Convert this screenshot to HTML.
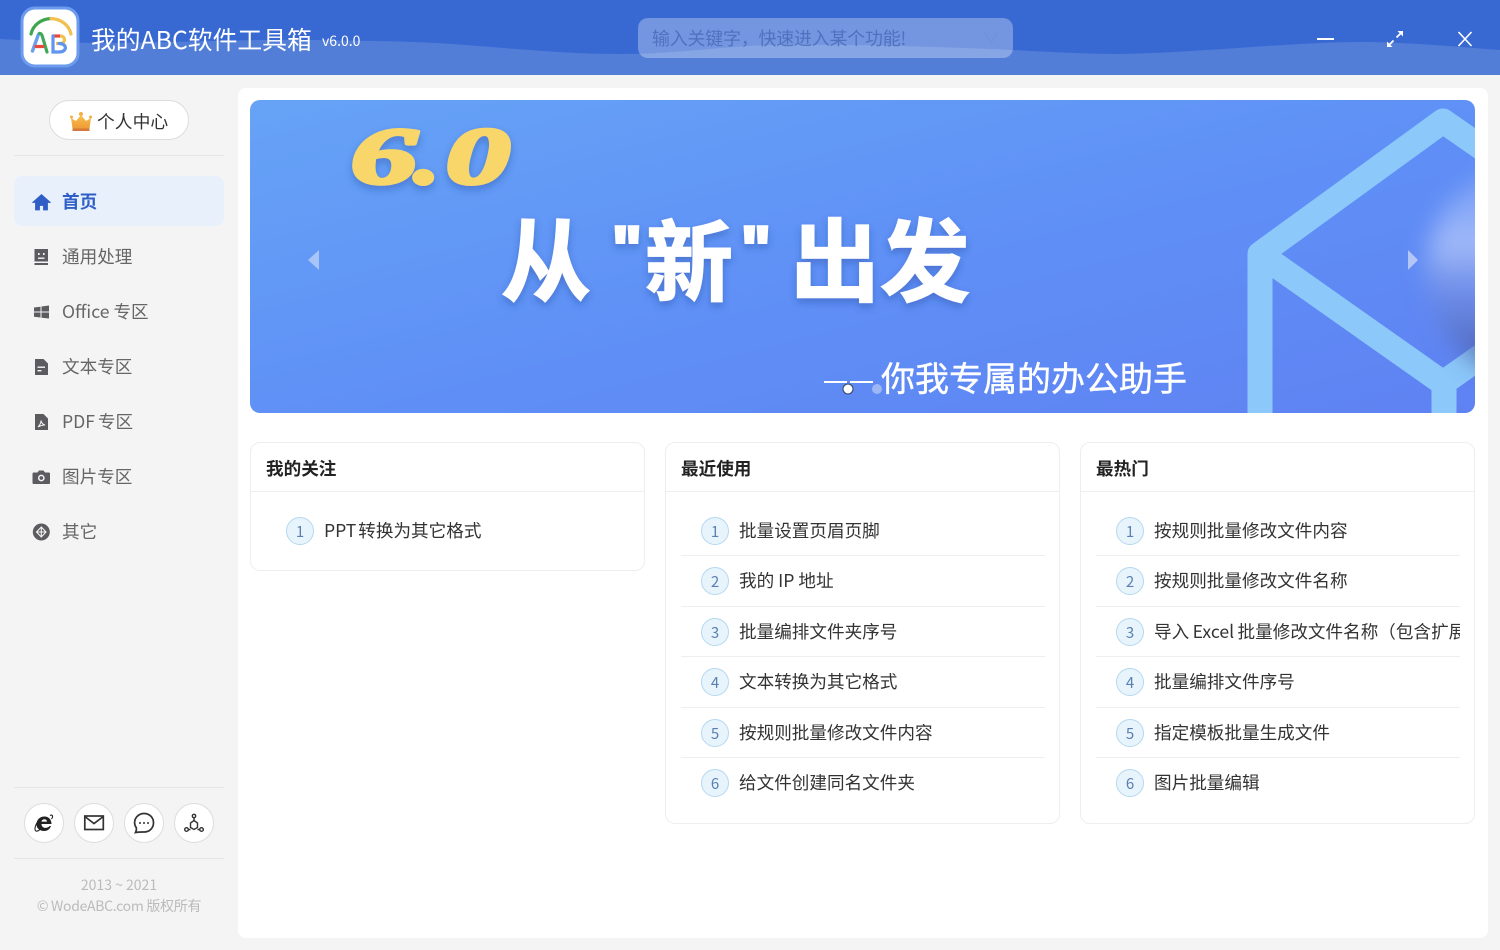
<!DOCTYPE html>
<html lang="zh-CN"><head><meta charset="utf-8"><title>我的ABC软件工具箱</title>
<style>
*{box-sizing:border-box;margin:0;padding:0}
html,body{width:1500px;height:950px;overflow:hidden;background:#f4f4f4;font-family:"Noto Sans CJK SC","Liberation Sans",sans-serif;color:#333}
.a{position:absolute;white-space:nowrap}
#page{position:relative;width:1500px;height:950px;overflow:hidden}
.nav{position:absolute;left:62px;font-size:17.6px;line-height:24px;color:#666;white-space:nowrap}
.ico{position:absolute;left:31px}
.div{position:absolute;left:14px;width:210px;height:1px;background:#e6e6e6}
.round{position:absolute;top:803px;width:40px;height:40px;border-radius:50%;background:#fff;border:1px solid #ddd}
.round svg{position:absolute;left:6px;top:6px}
.card{position:absolute;top:442px;width:395px;background:#fff;border:1px solid #eee;border-radius:10px;overflow:hidden}
.card h3{position:absolute;left:15px;top:13px;font-size:17.6px;line-height:26px;font-weight:700;color:#222;white-space:nowrap}
.card .hl{position:absolute;left:0;right:0;top:48px;height:1px;background:#eee}
.n{position:absolute;left:35px;width:28px;height:28px;border-radius:50%;background:#e8f4fc;border:1px solid #b5d8ee;color:#5a7fb0;font-size:15px;line-height:27px;text-align:center}
.t{position:absolute;left:73px;width:306px;overflow:hidden;font-size:17.6px;line-height:26px;color:#333;white-space:nowrap}
.s{position:absolute;left:15px;width:364px;height:1px;background:#eee}
</style></head><body><div id="page">

<!-- header -->
<svg class="a" style="left:0;top:0" width="1500" height="75" viewBox="0 0 1500 75">
<rect width="1500" height="75" fill="#3868d2"/>
<path d="M0 39C40 41 70 43 100 43C170 43 240 39 312 40C360 41 400 41 437 43C500 47 560 54 620 54C680 54 720 46 772 45C860 44 950 47 1013 50C1050 52 1085 54 1117 54C1200 53 1300 41 1369 42C1420 43 1460 47 1500 50V75H0Z" fill="#527ed8"/>
</svg>
<svg class="a" style="left:18px;top:5px" width="64" height="64" viewBox="18 5 64 64">
<rect x="22" y="8" width="56" height="58" rx="13" fill="#fff" stroke="#6d9bee" stroke-width="3"/>
<path d="M31 34C33 25 41 19 51 18.500" fill="none" stroke="#3fa64f" stroke-width="3.200" stroke-linecap="round"/>
<path d="M51 18.500C61 19 69 25 71 34" fill="none" stroke="#f2c04d" stroke-width="3.200" stroke-linecap="round"/>
<path d="M32.500 51L37.500 37C38 35 38.500 34 39.500 33.500" fill="none" stroke="#6a9ff0" stroke-width="3.400" stroke-linecap="round"/>
<path d="M39.500 33.500C41.500 33.500 42 35 42.500 37L47 52" fill="none" stroke="#41a85a" stroke-width="3.200" stroke-linecap="round"/>
<path d="M36 46.500H43" stroke="#e8493f" stroke-width="3.200" stroke-linecap="round"/>
<path d="M53 36H60" stroke="#e8493f" stroke-width="3.200" stroke-linecap="round"/>
<path d="M60 36C66 36 66 43.500 60 43.500H56" fill="none" stroke="#f2c04d" stroke-width="3.200"/>
<path d="M59 43.500C67.500 43.500 67.500 52 59 52H53V36" fill="none" stroke="#5f95ee" stroke-width="3.200" stroke-linecap="round"/>
</svg>
<div class="a" style="left:91px;top:20px;font-size:24.800px;line-height:38px;color:#fff">我的ABC软件工具箱</div>
<div class="a" style="left:322px;top:31px;font-size:14px;line-height:20px;color:#fff">v6.0.0</div>
<div class="a" style="left:638px;top:18px;width:375px;height:40px;border-radius:10px;background:rgba(255,255,255,.3)"></div>
<div class="a" style="left:652px;top:25px;font-size:18px;line-height:26px;color:rgba(50,85,165,.55);letter-spacing:-.25px">输入关键字，快速进入某个功能!</div>
<svg class="a" style="left:983px;top:30px" width="16" height="16"><path d="M2 3L8 13L14 3" fill="none" stroke="#6e8fdc" stroke-width="1"/></svg>
<div class="a" style="left:1317px;top:38px;width:17px;height:2px;background:#fff"></div>
<svg class="a" style="left:1385px;top:29px" width="20" height="20" viewBox="0 0 20 20"><path d="M4 16L8.500 11.500M11.500 8.500L16 4" stroke="#fff" stroke-width="1.800"/><path d="M2 18V12.500L7.500 18ZM18 2V7.500L12.500 2Z" fill="#fff"/></svg>
<svg class="a" style="left:1456px;top:30px" width="18" height="18"><path d="M2.500 2L15.500 16M15.500 2L2.500 16" stroke="#fff" stroke-width="1.600"/></svg>

<!-- main panel -->
<div class="a" style="left:238px;top:88px;width:1250px;height:850px;background:#fff;border-radius:8px"></div>

<!-- sidebar -->
<div class="a" style="left:49px;top:100px;width:140px;height:40px;border-radius:20px;background:#fff;border:1px solid #ddd"></div>
<svg class="a" style="left:69px;top:111px" width="25" height="22" viewBox="0 0 25 22">
<defs><linearGradient id="cr" x1="0" y1="0" x2="0" y2="1"><stop offset="0" stop-color="#fbc04c"/><stop offset="1" stop-color="#ee9a3a"/></linearGradient></defs>
<circle cx="12" cy="3" r="2" fill="#f4ae42"/><circle cx="2.500" cy="6" r="1.500" fill="#f4ae42"/><circle cx="21.500" cy="6" r="1.500" fill="#f4ae42"/>
<path d="M2 7L7 10L12 4L17 10L22 7L20.500 17.500H3.500Z" fill="url(#cr)"/><rect x="3.500" y="17.500" width="17" height="2.500" fill="#d5783a"/></svg>
<div class="a" style="left:97px;top:108px;font-size:17.800px;line-height:26px;color:#333">个人中心</div>
<div class="div" style="top:155px"></div>

<div class="a" style="left:14px;top:176px;width:210px;height:50px;border-radius:8px;background:#e8f0fc"></div>
<svg class="ico" style="top:192px" width="20" height="20" viewBox="0 0 20 20"><path d="M10.500 2.500L1.500 10.500H4.500V18H8.500V13.500H12.500V18H16.500V10.500H19.500Z" fill="#2f5fc6" stroke="#2f5fc6" stroke-width=".8" stroke-linejoin="round"/></svg>
<div class="nav" style="top:190px;color:#2f5fc6;font-weight:700">首页</div>
<svg class="ico" style="top:247px" width="20" height="20" viewBox="0 0 20 20"><path d="M3.500 2H17V14.500H3.500Z" fill="#5c5c60"/><rect x="3.500" y="16" width="13.500" height="2" fill="#5c5c60"/><rect x="7" y="6" width="1.600" height="2" fill="#f5f5f5"/><rect x="12" y="6" width="1.600" height="2" fill="#f5f5f5"/><rect x="7" y="10.500" width="6.500" height="1.400" fill="#f5f5f5"/></svg>
<div class="nav" style="top:245px">通用处理</div>
<svg class="ico" style="top:302px" width="20" height="20" viewBox="0 0 20 20"><path d="M3 5.500L9.500 4.700V9.500H3ZM10.500 4.500L18 3.500V9.500H10.500ZM3 10.500H9.500V15.500L3 14.700ZM10.500 10.500H18V16.500L10.500 15.700Z" fill="#5c5c60"/></svg>
<div class="nav" style="top:300px">Office 专区</div>
<svg class="ico" style="top:357px" width="20" height="20" viewBox="0 0 20 20"><path d="M4 2H12.500L17 6.500V18H4Z" fill="#5c5c60"/><rect x="6.500" y="9.500" width="7.500" height="1.400" fill="#f5f5f5"/><rect x="6.500" y="13" width="4" height="1.400" fill="#f5f5f5"/></svg>
<div class="nav" style="top:355px">文本专区</div>
<svg class="ico" style="top:412px" width="20" height="20" viewBox="0 0 20 20"><path d="M4 2H12.500L17 6.500V18H4Z" fill="#5c5c60"/><path d="M7 15C9 13 10 11 10 8.500C10.500 11 12 12.500 14 13C11.500 13 9.500 13.500 7 15Z" fill="none" stroke="#f5f5f5" stroke-width="1"/></svg>
<div class="nav" style="top:410px;word-spacing:-1px">PDF 专区</div>
<svg class="ico" style="top:467px" width="20" height="20" viewBox="0 0 20 20"><path d="M2.500 5.500H6.500L8 3.500H12.500L14 5.500H18C18.500 5.500 19 6 19 6.500V16C19 16.500 18.500 17 18 17H2.500C2 17 1.500 16.500 1.500 16V6.500C1.500 6 2 5.500 2.500 5.500Z" fill="#5c5c60"/><circle cx="10.300" cy="11" r="2.600" fill="none" stroke="#f5f5f5" stroke-width="1.500"/></svg>
<div class="nav" style="top:465px">图片专区</div>
<svg class="ico" style="top:522px" width="20" height="20" viewBox="0 0 20 20"><circle cx="10.300" cy="10" r="8.500" fill="#5c5c60"/><path d="M10.300 5L15 10L10.300 15L5.500 10ZM10.300 5V15M5.500 10H15" fill="none" stroke="#f5f5f5" stroke-width="1.100"/></svg>
<div class="nav" style="top:520px">其它</div>

<div class="div" style="top:787px"></div>
<div class="round" style="left:24px"><svg width="26" height="26" viewBox="0 0 26 26"><path d="M5.500 14.500C5.500 9.500 9 6.500 13.500 6.500C18 6.500 20.500 10 20.500 14H10.500C10.500 18.500 16 19 18.700 16H20C18.500 20 15.500 21 13 21C9 21 5.500 18.500 5.500 14.500ZM10.500 11.600H16C15.800 8.500 11 8.500 10.500 11.600Z" fill="#222"/><path d="M19 5.500C21.500 4 22.500 6.500 20.500 9M8 10C4 15 3 20 5 21C6 21.500 8 20.500 9 19.500" fill="none" stroke="#222" stroke-width="1.100"/></svg></div>
<div class="round" style="left:74px"><svg width="26" height="26" viewBox="0 0 26 26"><rect x="3.800" y="6" width="18.500" height="13.500" fill="none" stroke="#333" stroke-width="1.700"/><path d="M3.800 6.500L13 13.500L22.300 6.500" fill="none" stroke="#333" stroke-width="1.700"/></svg></div>
<div class="round" style="left:124px"><svg width="26" height="26" viewBox="0 0 26 26"><path d="M13 3.500C18.500 3.500 22.500 7.500 22.500 12.800C22.500 18 18.500 22 13 22C11 22 8 21.800 4.500 22.500C5.300 21 5.600 19.500 5.400 18C4.300 16.500 3.600 14.800 3.600 12.800C3.600 7.500 8 3.500 13 3.500Z" fill="none" stroke="#333" stroke-width="1.700"/><circle cx="9" cy="13" r="1" fill="#333"/><circle cx="13" cy="13" r="1" fill="#333"/><circle cx="17" cy="13" r="1" fill="#333"/></svg></div>
<div class="round" style="left:174px"><svg width="26" height="26" viewBox="0 0 26 26" fill="none" stroke="#333" stroke-width="1.400"><circle cx="13" cy="6" r="1.700"/><circle cx="5.500" cy="19.500" r="1.800"/><circle cx="20.500" cy="19.500" r="1.800"/><path d="M13 7.700V10.500M7.300 19.500H9.500M16.500 19.500H18.700"/><path d="M13 10.500L16.500 13V17.500L13 19.500L9.500 17.500V13Z"/></svg></div>
<div class="div" style="top:858px"></div>
<div class="a" style="left:14px;width:210px;top:875px;text-align:center;font-size:14px;line-height:20px;color:#bbb">2013 ~ 2021</div>
<div class="a" style="left:14px;width:210px;top:896px;text-align:center;font-size:14px;line-height:20px;color:#bbb;letter-spacing:-.3px">© WodeABC.com 版权所有</div>

<!-- banner -->
<svg class="a" style="left:250px;top:100px" width="1225" height="313" viewBox="250 100 1225 313">
<defs>
<linearGradient id="bg" x1="0" y1="0" x2="1" y2="1"><stop offset="0" stop-color="#66a3f6"/><stop offset=".55" stop-color="#5f8ff6"/><stop offset="1" stop-color="#5f82f2"/></linearGradient>
<linearGradient id="sd" x1="0" y1="0" x2="0" y2="1"><stop offset="0" stop-color="#fff" stop-opacity=".08"/><stop offset=".38" stop-color="#fff" stop-opacity=".42"/><stop offset=".62" stop-color="#7f8fd0" stop-opacity=".32"/><stop offset="1" stop-color="#2d3f88" stop-opacity=".8"/></linearGradient>
<filter id="bl" x="-30%" y="-30%" width="160%" height="160%"><feGaussianBlur stdDeviation="12"/></filter>
<filter id="sh" x="-10%" y="-10%" width="120%" height="130%"><feDropShadow dx="0" dy="4" stdDeviation="4" flood-color="#1d3b8a" flood-opacity=".35"/></filter>
<clipPath id="cp"><rect x="250" y="100" width="1225" height="313" rx="10"/></clipPath>
</defs>
<g clip-path="url(#cp)">
<rect x="250" y="100" width="1225" height="313" fill="url(#bg)"/>
<path d="M1260 420V254L1443 121L1495 157M1260 254L1443 383L1490 350M1444 383V420" fill="none" stroke="#8cc8fa" stroke-width="25" stroke-linejoin="round"/>
<ellipse cx="1525" cy="270" rx="98" ry="105" fill="url(#sd)" filter="url(#bl)"/>
<g filter="url(#sh)" font-family="Liberation Serif" font-weight="700" font-style="italic" font-size="80" fill="#f8d66a" stroke="#f8d66a" stroke-width="4" stroke-linejoin="round">
<text transform="translate(351 183) scale(1.65 1)">6</text>
<text transform="translate(414 183) scale(1.3 1)">.</text>
<text transform="translate(446 183) scale(1.6 1)">0</text>
</g>
<g filter="url(#sh)" font-family="Noto Sans CJK SC,sans-serif" font-weight="700" font-size="90" fill="#fff" stroke="#fff" stroke-width="1.500">
<text x="501" y="294">从</text>
<text x="645" y="294" font-size="88">新</text>
<text x="612" y="270" font-size="63" font-family="Liberation Sans" stroke-width="3">"</text>
<text x="741" y="270" font-size="63" font-family="Liberation Sans" stroke-width="3">"</text>
<text x="790" y="294">出</text>
<text x="880" y="294">发</text>
</g>
<rect x="824" y="381" width="23" height="2" fill="#fff"/><rect x="850" y="381" width="23" height="2" fill="#fff"/>
<text x="881" y="391" font-family="Noto Sans CJK SC,sans-serif" font-size="34" fill="#fff" stroke="#fff" stroke-width=".4">你我专属的办公助手</text>
<circle cx="848" cy="389" r="5" fill="#fff" stroke="#33425f" stroke-width="1"/>
<circle cx="877" cy="389" r="5" fill="#9db7f5"/>
<path d="M319 250V270L308 260Z" fill="#a8c4f8"/>
<path d="M1408 250V270L1418 260Z" fill="#b4c6f6"/>
</g></svg>

<!-- cards -->
<div class="card" style="left:250px;height:129px"><h3>我的关注</h3><div class="hl"></div>
<div class="n" style="top:74px">1</div><div class="t" style="top:75px;word-spacing:-2px">PPT 转换为其它格式</div></div>

<div class="card" style="left:665px;height:382px"><h3>最近使用</h3><div class="hl"></div>
<div class="n" style="top:74px">1</div><div class="t" style="top:75px">批量设置页眉页脚</div><div class="s" style="top:112px"></div>
<div class="n" style="top:124px">2</div><div class="t" style="top:125px">我的 IP 地址</div><div class="s" style="top:163px"></div>
<div class="n" style="top:175px">3</div><div class="t" style="top:176px">批量编排文件夹序号</div><div class="s" style="top:213px"></div>
<div class="n" style="top:225px">4</div><div class="t" style="top:226px">文本转换为其它格式</div><div class="s" style="top:264px"></div>
<div class="n" style="top:276px">5</div><div class="t" style="top:277px">按规则批量修改文件内容</div><div class="s" style="top:314px"></div>
<div class="n" style="top:326px">6</div><div class="t" style="top:327px">给文件创建同名文件夹</div></div>

<div class="card" style="left:1080px;height:382px"><h3>最热门</h3><div class="hl"></div>
<div class="n" style="top:74px">1</div><div class="t" style="top:75px">按规则批量修改文件内容</div><div class="s" style="top:112px"></div>
<div class="n" style="top:124px">2</div><div class="t" style="top:125px">按规则批量修改文件名称</div><div class="s" style="top:163px"></div>
<div class="n" style="top:175px">3</div><div class="t" style="top:176px;word-spacing:-.5px">导入 Excel 批量修改文件名称（包含扩展名）</div><div class="s" style="top:213px"></div>
<div class="n" style="top:225px">4</div><div class="t" style="top:226px">批量编排文件序号</div><div class="s" style="top:264px"></div>
<div class="n" style="top:276px">5</div><div class="t" style="top:277px">指定模板批量生成文件</div><div class="s" style="top:314px"></div>
<div class="n" style="top:326px">6</div><div class="t" style="top:327px">图片批量编辑</div></div>

</div></body></html>
